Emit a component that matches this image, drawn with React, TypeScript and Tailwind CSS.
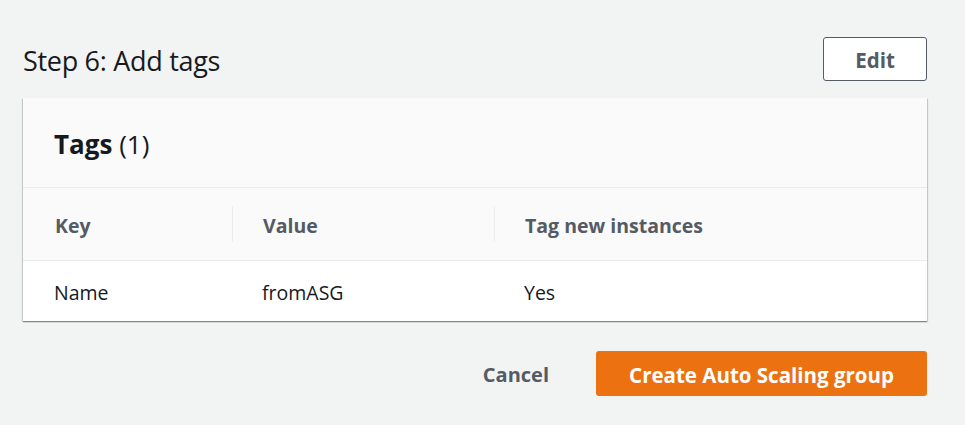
export default function App() {
  const font = { fontFamily: '"Open Sans", "Noto Sans", sans-serif' };
  return (
    <div className="min-h-screen w-[965px] h-[425px] bg-[#f2f3f3] text-[#16191f]" style={font}>
      <div className="pl-[23px] pr-[38px] pt-[37px]">
        {/* Step header */}
        <div className="flex items-center justify-between h-[44px]">
          <h2 className="text-[27px] leading-none font-normal tracking-[-0.3px] pt-[2px]">Step 6: Add tags</h2>
          <button className="w-[104px] h-[44px] pt-[2px] rounded-[3px] border border-[#545b64] bg-white text-[#545b64] font-bold text-[20.5px]">
            Edit
          </button>
        </div>

        {/* Tags card */}
        <div className="mt-[17px] bg-white shadow-[0_1px_1px_0_rgba(0,28,36,0.3),1px_1px_1px_0_rgba(0,28,36,0.15),-1px_1px_1px_0_rgba(0,28,36,0.15)]">
          <div className="h-[90px] bg-[#fafafa] border-b border-[#eaeded] flex items-center px-[31px] pt-[2px]">
            <h3 className="text-[26px] leading-none">
              <span className="font-bold">Tags</span> <span className="font-normal text-[#16191f]">(1)</span>
            </h3>
          </div>
          <div className="grid grid-cols-[209px_262px_1fr] h-[73px] bg-[#fafafa] border-b border-[#eaeded] items-center text-[19.5px] font-bold text-[#545b64]">
            <div className="pl-[32px] pt-[3px]">Key</div>
            <div className="border-l border-[#eaeded] h-[36px] flex items-center pl-[30px] pt-[3px]">Value</div>
            <div className="border-l border-[#eaeded] h-[36px] flex items-center pl-[30px] pt-[3px]">Tag new instances</div>
          </div>
          <div className="grid grid-cols-[209px_262px_1fr] h-[60px] items-center text-[19.5px] pt-[3px]">
            <div className="pl-[31px]">Name</div>
            <div className="pl-[30px]">fromASG</div>
            <div className="pl-[30px]">Yes</div>
          </div>
        </div>

        {/* Actions */}
        <div className="mt-[30px] flex items-center justify-end gap-[14px]">
          <button className="h-[45px] px-[33px] pt-[3px] text-[20px] font-bold text-[#545b64]">Cancel</button>
          <button className="h-[45px] w-[331px] pt-[3px] rounded-[3px] bg-[#ec7211] text-white text-[20.5px] font-bold">
            Create Auto Scaling group
          </button>
        </div>
      </div>
    </div>
  );
}
